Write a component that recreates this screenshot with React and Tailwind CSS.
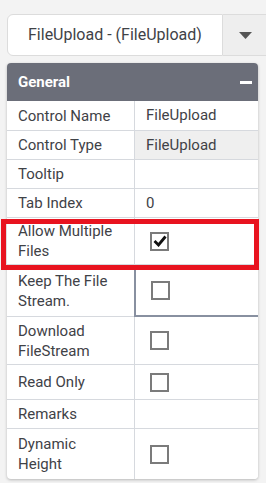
import React from 'react';

const rows = [
  { label: 'Control Name', value: 'FileUpload', h: 'h-[30px]' },
  { label: 'Control Type', value: 'FileUpload', h: 'h-[29px]', readonly: true },
  { label: 'Tooltip', value: '', h: 'h-[29px]' },
  { label: 'Tab Index', value: '0', h: 'h-[29px]' },
  { label: ['Allow Multiple', 'Files'], check: true, checked: true, h: 'h-[47px]' },
  { label: ['Keep The File', 'Stream.'], check: true, h: 'h-[52px]', focused: true },
  { label: ['Download', 'FileStream'], check: true, h: 'h-[48px]' },
  { label: 'Read Only', check: true, h: 'h-[35px]' },
  { label: 'Remarks', value: '', h: 'h-[29px]' },
  { label: ['Dynamic', 'Height'], check: true, h: 'h-[50px]' },
]

const Checkbox = ({ checked }) => (
  <div className="w-[19px] h-[19px] border-2 border-[#7b7b7b] bg-white flex items-center justify-center">
    {checked ? (
      <svg width="14" height="12" viewBox="0 0 14 12">
        <path d="M1.5 6 L5.5 10 L12.5 1.5" fill="none" stroke="#111" strokeWidth="2.8" />
      </svg>
    ) : null}
  </div>
)

const App = () => {
  return (
    <div className="relative w-[266px] h-[483px] overflow-hidden bg-[#f3f3f3] pl-[7px] pt-[14px] text-[#3f4247]" style={{ fontFamily: 'Roboto, "Liberation Sans", sans-serif' }}>
      <div className="flex h-[42px]">
        <div className="w-[216px] bg-white border border-[#dcdcdc] rounded-l-[6px] flex items-center pl-[20px] text-[16px]">
          FileUpload - (FileUpload)
        </div>
        <div className="flex-1 bg-[#eeeeee] border-y border-[#dcdcdc] flex items-center pl-[16px]">
          <svg width="13" height="7" viewBox="0 0 13 7">
            <path d="M0 0 L13 0 L6.5 7 Z" fill="#555" />
          </svg>
        </div>
      </div>

      <div className="mt-[7px] w-[251px] rounded-[4px] bg-white shadow-[0_1px_3px_rgba(0,0,0,0.25)] overflow-hidden">
        <div className="h-[38px] bg-[#6b6e79] flex items-center justify-between pl-[11px] pr-[6px]">
          <span className="text-white font-bold text-[15px]">General</span>
          <span className="w-[12px] h-[3px] bg-white" />
        </div>
        {rows.map((r, i) => (
          <div key={i} className={`flex ${r.h} border-b border-[#d6d9de] last:border-b-0`}>
            <div className="w-[128px] border-r border-[#d6d9de] flex flex-col justify-center pl-[11px] text-[15px] leading-[20px]">
              {Array.isArray(r.label) ? r.label.map((l, j) => <span key={j}>{l}</span>) : r.label}
            </div>
            <div className={`flex-1 flex items-center pl-[15px] text-[15px] ${r.readonly ? 'bg-[#efefef]' : 'bg-white'} ${r.focused ? 'border-l-2 border-b-2 border-[#8890a0] -ml-px -mb-px' : ''}`}>
              {r.check ? <Checkbox checked={r.checked} /> : <span className="-ml-[4px]">{r.value}</span>}
            </div>
          </div>
        ))}
      </div>

      <div className="absolute left-[1px] top-[219px] w-[258px] h-[51px] border-[5px] border-[#e8131f]" />
    </div>
  )
}

export default App
